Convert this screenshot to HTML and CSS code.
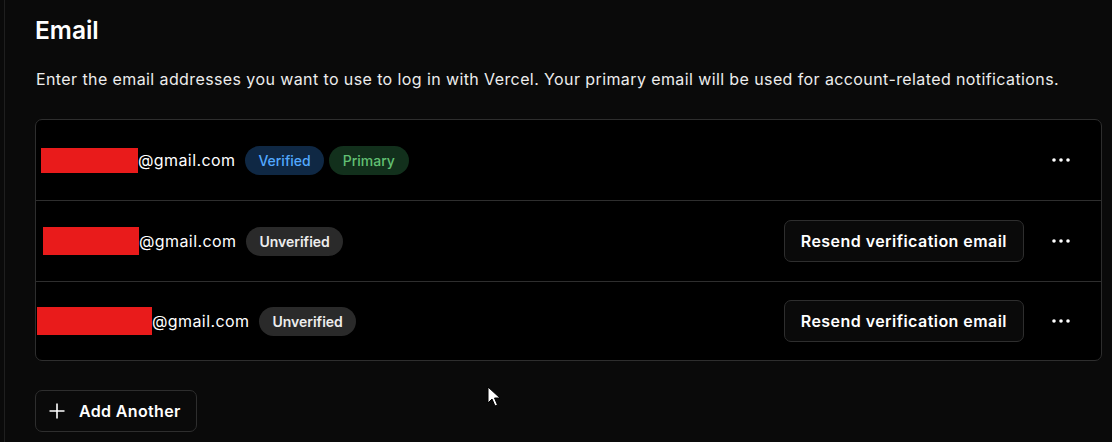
FILE: index.html
```html
<!DOCTYPE html>
<html>
<head>
<meta charset="utf-8">
<link rel="stylesheet" href="styles.css">
</head>
<body>
<div class="panel">
  <h2 class="title">Email</h2>
  <p class="desc">Enter the email addresses you want to use to log in with Vercel. Your primary email will be used for account-related notifications.</p>
  <div class="card">
    <div class="row">
      <div class="email"><span class="redact r1"></span><span>@gmail.com</span></div>
      <span class="badge blue">Verified</span>
      <span class="badge green">Primary</span>
      <div class="spacer"></div>
      <button class="dots" aria-label="More"><svg width="20" height="4" viewBox="0 0 20 4"><circle cx="3" cy="2" r="1.8" fill="#fff"/><circle cx="10" cy="2" r="1.8" fill="#fff"/><circle cx="17" cy="2" r="1.8" fill="#fff"/></svg></button>
    </div>
    <div class="row">
      <div class="email"><span class="redact r2"></span><span>@gmail.com</span></div>
      <span class="badge gray">Unverified</span>
      <div class="spacer"></div>
      <button class="btn">Resend verification email</button>
      <button class="dots" aria-label="More"><svg width="20" height="4" viewBox="0 0 20 4"><circle cx="3" cy="2" r="1.8" fill="#fff"/><circle cx="10" cy="2" r="1.8" fill="#fff"/><circle cx="17" cy="2" r="1.8" fill="#fff"/></svg></button>
    </div>
    <div class="row last">
      <div class="email"><span class="redact r3"></span><span>@gmail.com</span></div>
      <span class="badge gray">Unverified</span>
      <div class="spacer"></div>
      <button class="btn">Resend verification email</button>
      <button class="dots" aria-label="More"><svg width="20" height="4" viewBox="0 0 20 4"><circle cx="3" cy="2" r="1.8" fill="#fff"/><circle cx="10" cy="2" r="1.8" fill="#fff"/><circle cx="17" cy="2" r="1.8" fill="#fff"/></svg></button>
    </div>
  </div>
  <button class="add"><svg width="18" height="18" viewBox="0 0 18 18"><path d="M9 1.5v15M1.5 9h15" stroke="#fff" stroke-width="1.6" fill="none"/></svg><span>Add Another</span></button>
</div>
<svg class="cursor" width="14" height="22" viewBox="0 0 14 22"><path d="M1 1 L1 17 L5 13 L8 20 L10.5 19 L7.5 12 L13 12 Z" fill="#fff" stroke="#000" stroke-width="1"/></svg>
</body>
</html>
```
FILE: styles.css
```css
html, body {
  margin: 0;
  padding: 0;
  background: #0a0a0a;
  height: 100%;
  overflow: hidden;
}
body {
  font-family: Inter, "Noto Sans", sans-serif;
  color: #ededed;
  position: relative;
}
.panel {
  margin-left: 4px;
  border-left: 1px solid #1f1f1f;
  padding: 14px 10px 0 30px;
  min-height: 100%;
  box-sizing: border-box;
}
.title {
  margin: 0;
  font-size: 24.5px;
  line-height: 32px;
  font-weight: 600;
  color: #fff;
  letter-spacing: 0;
}
.desc {
  margin: 21px 0 0 1px;
  font-size: 16px;
  line-height: 24px;
  letter-spacing: 0.4px;
  color: #ededed;
}
.card {
  margin-top: 28px;
  background: #000;
  border: 1px solid #2e2e2e;
  border-radius: 7px;
}
.row {
  display: flex;
  align-items: center;
  height: 80px;
  padding: 0 24px 0 5px;
  border-top: 1px solid #2e2e2e;
}
.row:first-child {
  border-top: none;
}
.row.last {
  height: 78px;
}
.email {
  display: flex;
  align-items: center;
  font-size: 16px;
  letter-spacing: 0.4px;
  color: #fff;
  margin-right: 10px;
}
.redact {
  display: inline-block;
  background: #e91b1b;
}
.r1 { width: 97px; height: 25px; margin-left: 0; }
.r2 { width: 96px; height: 28px; margin-left: 2px; }
.r3 { width: 115px; height: 28px; margin-left: -4px; }
.badge {
  display: inline-flex;
  align-items: center;
  height: 29px;
  padding: 0 13px;
  border-radius: 15px;
  font-size: 14px;
  font-weight: 500;
  margin-right: 5px;
}
.blue { background: #0f2844; color: #52a8ff; }
.green { background: #12301c; color: #62c073; padding: 0 14px; }
.gray { background: #2a2a2a; color: #ededed; font-weight: 600; }
.spacer { flex: 1; }
.btn {
  height: 42px;
  padding: 0 16px;
  background: #0a0a0a;
  border: 1px solid #2e2e2e;
  border-radius: 7px;
  color: #fff;
  font-family: inherit;
  font-size: 16px;
  font-weight: 600;
  letter-spacing: 0.45px;
  margin-right: 21px;
}
.dots {
  width: 32px;
  height: 32px;
  display: flex;
  align-items: center;
  justify-content: center;
  background: none;
  border: none;
  padding: 0;
}
.add {
  margin-top: 29px;
  display: flex;
  align-items: center;
  gap: 13px;
  height: 42px;
  padding: 0 15px 0 12px;
  background: #0a0a0a;
  border: 1px solid #2e2e2e;
  border-radius: 7px;
  color: #fff;
  font-family: inherit;
  font-size: 16px;
  font-weight: 600;
  letter-spacing: 0.35px;
}
.cursor {
  position: absolute;
  left: 487px;
  top: 386px;
}
```
